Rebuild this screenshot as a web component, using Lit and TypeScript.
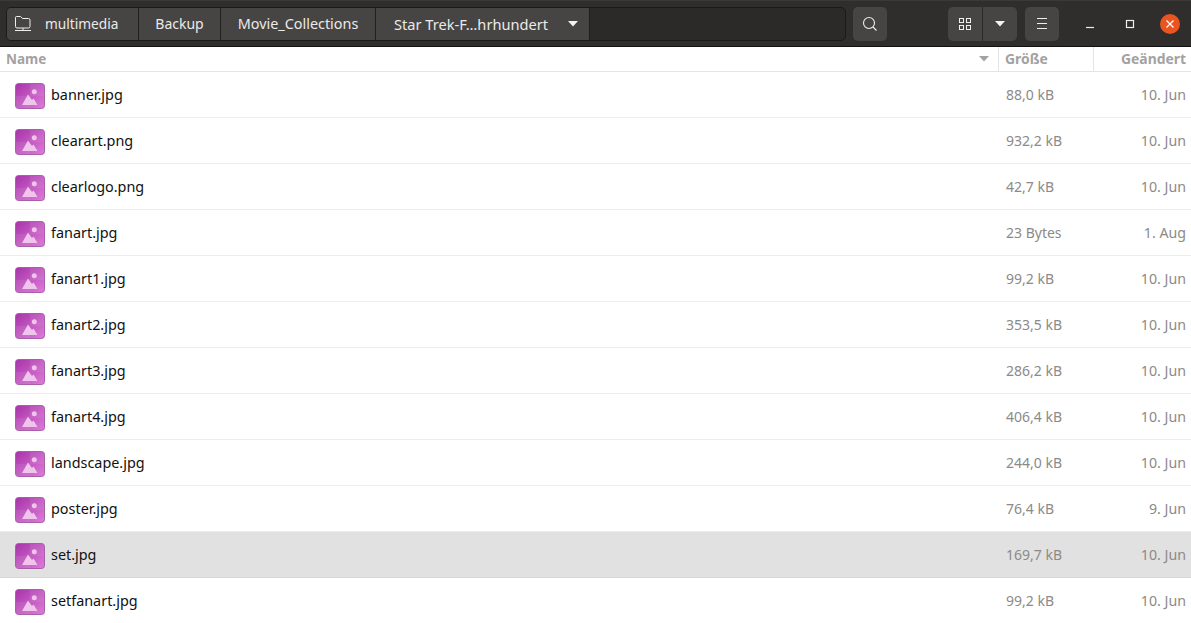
import { LitElement, html, css, svg } from "lit";
import { customElement } from "lit/decorators.js";

const rows: [string, string, string][] = [
  ["banner.jpg", "88,0 kB", "10. Jun"],
  ["clearart.png", "932,2 kB", "10. Jun"],
  ["clearlogo.png", "42,7 kB", "10. Jun"],
  ["fanart.jpg", "23 Bytes", "1. Aug"],
  ["fanart1.jpg", "99,2 kB", "10. Jun"],
  ["fanart2.jpg", "353,5 kB", "10. Jun"],
  ["fanart3.jpg", "286,2 kB", "10. Jun"],
  ["fanart4.jpg", "406,4 kB", "10. Jun"],
  ["landscape.jpg", "244,0 kB", "10. Jun"],
  ["poster.jpg", "76,4 kB", "9. Jun"],
  ["set.jpg", "169,7 kB", "10. Jun"],
  ["setfanart.jpg", "99,2 kB", "10. Jun"],
];

const fileIcon = svg`<svg class="ficon" width="32" height="32" viewBox="0 0 32 32">
  <defs><linearGradient id="g" x1="0" y1="0" x2="1" y2="1"><stop offset="0" stop-color="#a733a9"/><stop offset="1" stop-color="#de7cd8"/></linearGradient></defs>
  <rect x="1.500" y="4.500" width="29" height="25" rx="3" fill="url(#g)" stroke="#a85ea8" stroke-width="1"/>
  <path d="M16 5h14v12H16z" fill="#fff" opacity=".07"/>
  <path d="M2 17h14v12H2z" fill="#fff" opacity=".07"/>
  <circle cx="20.300" cy="12.800" r="2.500" fill="#f0c4ec"/>
  <path d="M8 26L14 15.500 18 21 19.500 19.500 23.500 26z" fill="#f0c4ec"/>
</svg>`;

const caret = svg`<svg width="10" height="6" viewBox="0 0 10 6"><path d="M0 0h10L5 5.500z" fill="#f4f4f4"/></svg>`;

@customElement("app-root")
export class AppRoot extends LitElement {
  static styles = css`
    :host { display: block; width: 1191px; height: 623px; overflow: hidden; background: #fff; font-family: "Noto Sans", sans-serif; font-size: 14px; }
    .bar { background: #2f2e2d; border-top: 1px solid #3a3938; border-bottom: 1px solid #111; display: flex; align-items: center; padding-left: 6px; box-sizing: border-box; height: 47px; color: #eee; }
    .path { width: 840px; height: 34px; box-sizing: border-box; display: flex; background: #2b2a29; border: 1px solid #1a1a19; border-radius: 5px; flex: none; }
    .crumb { display: flex; align-items: center; background: #464543; border-right: 1px solid #1f1f1e; box-sizing: border-box; height: 32px; justify-content: center; flex: none; color: #eceae8; font-size: 14.400px; }
    .crumb:first-child { border-radius: 4px 0 0 4px; }
    .c0 { width: 132px; justify-content: flex-start; padding-left: 7px; gap: 13px; font-size: 13.700px; }
    .c1 { width: 82px; font-size: 14px; }
    .c2 { width: 155px; }
    .c3 { width: 214px; justify-content: flex-start; padding-left: 18px; gap: 20px; font-size: 14.600px; }
    .btn { width: 34px; height: 34px; background: #464543; border-radius: 5px; display: flex; align-items: center; justify-content: center; flex: none; }
    .search { margin-left: 7px; }
    .group { margin-left: 61px; display: flex; width: 69px; height: 34px; border-radius: 5px; overflow: hidden; flex: none; background: #464543; }
    .group > div { display: flex; align-items: center; justify-content: center; height: 34px; }
    .g1 { width: 35px; border-right: 1px solid #2a2a29; box-sizing: border-box; }
    .g2 { width: 34px; }
    .menu { margin-left: 8px; }
    .win { margin-left: 11px; display: flex; flex: none; }
    .win > div { width: 40px; height: 34px; display: flex; align-items: center; justify-content: center; }
    .head { height: 25px; display: grid; grid-template-columns: 999px 95px 97px; border-bottom: 1px solid #e4e4e4; box-sizing: border-box; color: #a3a2a1; font-weight: 700; font-size: 13.900px; }
    .head > div { display: flex; align-items: center; box-sizing: border-box; height: 24px; }
    .hn { padding: 0 9px 0 6px; justify-content: space-between; border-right: 1px solid #e4e4e4; font-size: 13.500px; }
    .hs { padding: 0 0 2px 6px; border-right: 1px solid #e4e4e4; }
    .hd { justify-content: flex-end; padding: 0 5px 2px 0; }
    .row { height: 46px; display: grid; grid-template-columns: 999px 95px 97px; border-bottom: 1px solid #ededed; box-sizing: border-box; align-items: center; }
    .row.sel { background: #e1e1e1; border-bottom-color: #d6d6d6; }
    .name { display: flex; align-items: center; padding-left: 14px; gap: 5px; color: #111; font-size: 14.400px; }
    .size { padding-left: 7px; color: #8c8a88; }
    .date { text-align: right; padding-right: 5px; color: #8c8a88; font-size: 14.200px; }
    .ficon { flex: none; display: block; }
  `;

  render() {
    return html`
      <div class="bar">
        <div class="path">
          <div class="crumb c0">
            <svg width="18" height="18" viewBox="0 0 18 18" fill="none" stroke="#eee" stroke-width="1">
              <path d="M1.500 11.500V2.500a1 1 0 0 1 1-1h4l2 2h6a1.500 1.500 0 0 1 1.500 1.500v6.500a1.500 1.500 0 0 1-1.500 1.500H3a1.500 1.500 0 0 1-1.500-1.500z"/>
              <path d="M9 13v2M1 15.500h16"/>
            </svg>
            <span>multimedia</span>
          </div>
          <div class="crumb c1">Backup</div>
          <div class="crumb c2">Movie_Collections</div>
          <div class="crumb c3"><span>Star Trek-F…hrhundert</span>${caret}</div>
        </div>
        <div class="btn search">
          <svg width="16" height="16" viewBox="0 0 16 16" fill="none" stroke="#eee" stroke-width="1.100"><circle cx="7" cy="7" r="5.500"/><path d="M11 11l3.500 3.500"/></svg>
        </div>
        <div class="group">
          <div class="g1"><svg width="14" height="14" viewBox="0 0 14 14" fill="none" stroke="#eee"><rect x="1.500" y="1.500" width="4" height="4"/><rect x="8.500" y="1.500" width="4" height="4"/><rect x="1.500" y="8.500" width="4" height="4"/><rect x="8.500" y="8.500" width="4" height="4"/></svg></div>
          <div class="g2">${caret}</div>
        </div>
        <div class="btn menu">
          <svg width="12" height="12" viewBox="0 0 12 12" stroke="#eee"><path d="M1 .5h10M1 5.500h10M1 10.500h10"/></svg>
        </div>
        <div class="win">
          <div><svg width="10" height="10" viewBox="0 0 10 10" stroke="#eee" stroke-width="1.200"><path d="M1 8.500h8"/></svg></div>
          <div><svg width="10" height="10" viewBox="0 0 10 10" fill="none" stroke="#eee" stroke-width="1.200"><rect x="1.500" y="1.500" width="7" height="7"/></svg></div>
          <div><svg width="20" height="20" viewBox="0 0 20 20"><circle cx="10" cy="10" r="10" fill="#e95420"/><path d="M6.500 6.500l7 7M13.500 6.500l-7 7" stroke="#fff" stroke-width="1.300"/></svg></div>
        </div>
      </div>
      <div class="head">
        <div class="hn"><span>Name</span><svg width="10" height="6" viewBox="0 0 10 6"><path d="M0 0h10L5 5.500z" fill="#a3a2a1"/></svg></div>
        <div class="hs">Größe</div>
        <div class="hd">Geändert</div>
      </div>
      ${rows.map(
        ([n, s, d]) => html`<div class="row ${n === "set.jpg" ? "sel" : ""}">
          <div class="name">${fileIcon}<span>${n}</span></div>
          <div class="size">${s}</div>
          <div class="date">${d}</div>
        </div>`
      )}
    `;
  }
}
